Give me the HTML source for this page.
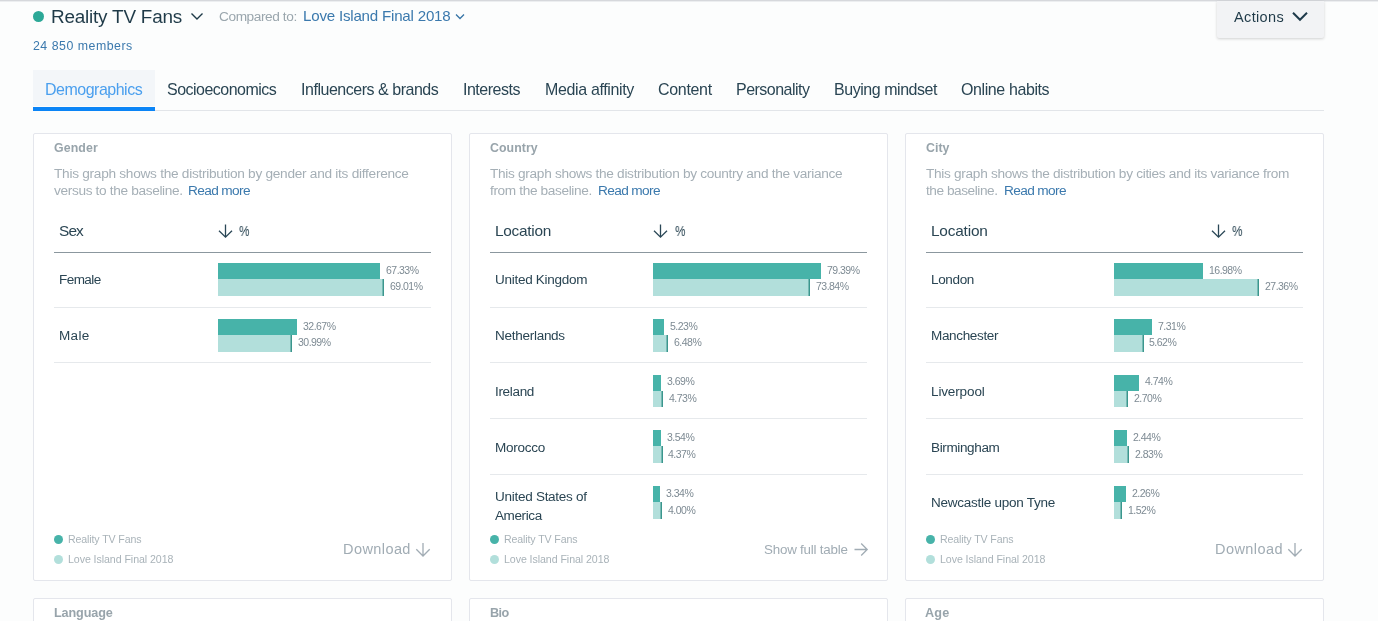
<!DOCTYPE html>
<html><head><meta charset="utf-8"><style>
html,body{margin:0;padding:0;}
body{width:1378px;height:621px;overflow:hidden;position:relative;background:#fcfdfd;font-family:"Liberation Sans",sans-serif;}
.t{position:absolute;white-space:nowrap;line-height:1;will-change:transform;}
.r{position:absolute;}
svg.r{overflow:visible;}
</style></head><body>
<div class="r" style="left:0px;top:0px;width:1378px;height:1px;background:#d6d8dc"></div>
<div class="r" style="left:0px;top:1px;width:1378px;height:1px;background:#eceef0"></div>
<div class="r" style="left:33px;top:11px;width:11px;height:11px;background:#2ca897;border-radius:50%"></div>
<div class="t" style="left:50.50px;top:8.00px;font-size:18.90px;letter-spacing:-0.197px;color:#1f3a48;">Reality TV Fans</div>
<svg class="r" style="left:190px;top:12px" width="14" height="9" viewBox="0 0 14 9"><path d="M1.5 1.5 L7 7 L12.5 1.5" fill="none" stroke="#1f3a48" stroke-width="1.4"/></svg>
<div class="t" style="left:218.50px;top:10.00px;font-size:13.66px;letter-spacing:-0.409px;color:#9aa6ad;">Compared to:</div>
<div class="t" style="left:302.50px;top:8.00px;font-size:15.12px;letter-spacing:-0.207px;color:#3b79ad;">Love Island Final 2018</div>
<svg class="r" style="left:455px;top:13px" width="10" height="7" viewBox="0 0 10 7"><path d="M1 1.5 L5 5.5 L9 1.5" fill="none" stroke="#3674a6" stroke-width="1.3"/></svg>
<div class="t" style="left:33.00px;top:40.00px;font-size:12.35px;letter-spacing:0.506px;color:#3b79ad;">24 850 members</div>
<div class="r" style="left:1217px;top:1px;width:107px;height:37px;background:#f2f3f5;box-shadow:0 1px 3px rgba(0,0,0,0.18);border-radius:0 0 2px 2px"></div>
<div class="t" style="left:1233.50px;top:10.00px;font-size:14.53px;letter-spacing:0.354px;color:#1f3a48;">Actions</div>
<svg class="r" style="left:1291px;top:11px" width="18" height="11" viewBox="0 0 18 11"><path d="M2 1.8 L9 8.8 L16 1.8" fill="none" stroke="#1f3b4b" stroke-width="2"/></svg>
<div class="r" style="left:33px;top:70px;width:121.5px;height:36px;background:#f3f6f9"></div>
<div class="r" style="left:33px;top:110px;width:1291px;height:1px;background:#e2e5e9"></div>
<div class="r" style="left:33px;top:107px;width:121.5px;height:4px;background:#0b84f6"></div>
<div class="t" style="left:45.20px;top:82.00px;font-size:15.99px;letter-spacing:-0.493px;color:#4a9fee;">Demographics</div>
<div class="t" style="left:167.10px;top:82.00px;font-size:15.99px;letter-spacing:-0.515px;color:#2a4553;">Socioeconomics</div>
<div class="t" style="left:301.10px;top:82.00px;font-size:15.99px;letter-spacing:-0.464px;color:#2a4553;">Influencers &amp; brands</div>
<div class="t" style="left:463.10px;top:82.00px;font-size:15.99px;letter-spacing:-0.489px;color:#2a4553;">Interests</div>
<div class="t" style="left:544.90px;top:82.00px;font-size:15.99px;letter-spacing:-0.349px;color:#2a4553;">Media affinity</div>
<div class="t" style="left:658.00px;top:82.00px;font-size:15.99px;letter-spacing:-0.307px;color:#2a4553;">Content</div>
<div class="t" style="left:735.80px;top:82.00px;font-size:15.99px;letter-spacing:-0.516px;color:#2a4553;">Personality</div>
<div class="t" style="left:833.90px;top:82.00px;font-size:15.99px;letter-spacing:-0.445px;color:#2a4553;">Buying mindset</div>
<div class="t" style="left:961.00px;top:82.00px;font-size:15.99px;letter-spacing:-0.391px;color:#2a4553;">Online habits</div>
<div class="r" style="left:33px;top:133px;width:419px;height:448px;background:#fff;border:1px solid #e4e6ec;border-radius:2px;box-sizing:border-box"></div>
<div class="r" style="left:33px;top:598px;width:419px;height:40px;background:#fff;border:1px solid #e4e6ec;border-radius:2px;box-sizing:border-box"></div>
<div class="r" style="left:469px;top:133px;width:419px;height:448px;background:#fff;border:1px solid #e4e6ec;border-radius:2px;box-sizing:border-box"></div>
<div class="r" style="left:469px;top:598px;width:419px;height:40px;background:#fff;border:1px solid #e4e6ec;border-radius:2px;box-sizing:border-box"></div>
<div class="r" style="left:905px;top:133px;width:419px;height:448px;background:#fff;border:1px solid #e4e6ec;border-radius:2px;box-sizing:border-box"></div>
<div class="r" style="left:905px;top:598px;width:419px;height:40px;background:#fff;border:1px solid #e4e6ec;border-radius:2px;box-sizing:border-box"></div>
<div class="t" style="left:53.80px;top:142.00px;font-size:12.35px;letter-spacing:0.112px;color:#98a4ab;font-weight:bold;">Gender</div>
<div class="t" style="left:53.80px;top:167.00px;font-size:13.66px;letter-spacing:-0.275px;color:#a5afb6;">This graph shows the distribution by gender and its difference</div>
<div class="t" style="left:53.80px;top:184.00px;font-size:13.66px;letter-spacing:-0.345px;color:#a5afb6;">versus to the baseline.</div>
<div class="t" style="left:188.20px;top:184.00px;font-size:13.66px;letter-spacing:-0.620px;color:#3b79ad;">Read more</div>
<div class="t" style="left:59.30px;top:223.00px;font-size:15.41px;letter-spacing:-0.889px;color:#2a4553;">Sex</div>
<svg class="r" style="left:217.5px;top:223px" width="16" height="16" viewBox="0 0 16 16"><path d="M7.5 1.5 V14.2 M1 7.8 L7.5 14.2 L14 7.8" fill="none" stroke="#2a4756" stroke-width="1.3"/></svg>
<div class="t" style="left:238.50px;top:224.00px;font-size:14.20px;letter-spacing:0.000px;color:#2a4553;transform:scaleX(0.84);transform-origin:0 0;">%</div>
<div class="r" style="left:54px;top:252px;width:377px;height:1px;background:#8b979e"></div>
<div class="r" style="left:54px;top:306.5px;width:377px;height:1px;background:#e6e9ec"></div>
<div class="r" style="left:54px;top:362.2px;width:377px;height:1px;background:#e6e9ec"></div>
<div class="t" style="left:59.30px;top:273.00px;font-size:13.52px;letter-spacing:-0.556px;color:#2a4553;">Female</div>
<div class="r" style="left:218px;top:263px;width:162.00px;height:16px;background:#47b3a9"></div>
<div class="r" style="left:218px;top:279px;width:166.20px;height:16.5px;background:#b2dfdb;box-shadow:inset -1.5px 0 0 #3b968d"></div>
<div class="t" style="left:385.80px;top:265.00px;font-size:10.50px;letter-spacing:-0.519px;color:#7d8a93;">67.33%</div>
<div class="t" style="left:390.00px;top:281.00px;font-size:10.50px;letter-spacing:-0.519px;color:#7d8a93;">69.01%</div>
<div class="t" style="left:59.30px;top:329.00px;font-size:13.52px;letter-spacing:0.322px;color:#2a4553;">Male</div>
<div class="r" style="left:218px;top:319px;width:78.80px;height:16px;background:#47b3a9"></div>
<div class="r" style="left:218px;top:335px;width:74.40px;height:16.5px;background:#b2dfdb;box-shadow:inset -1.5px 0 0 #3b968d"></div>
<div class="t" style="left:302.60px;top:321.00px;font-size:10.50px;letter-spacing:-0.519px;color:#7d8a93;">32.67%</div>
<div class="t" style="left:298.20px;top:337.00px;font-size:10.50px;letter-spacing:-0.519px;color:#7d8a93;">30.99%</div>
<div class="r" style="left:53.6px;top:535.2px;width:9px;height:9px;background:#47b3a9;border-radius:50%"></div>
<div class="r" style="left:53.6px;top:555px;width:9px;height:9px;background:#b2dfdb;border-radius:50%"></div>
<div class="t" style="left:68.10px;top:534.00px;font-size:10.61px;letter-spacing:-0.127px;color:#a9b3b9;">Reality TV Fans</div>
<div class="t" style="left:68.10px;top:554.00px;font-size:10.61px;letter-spacing:-0.066px;color:#a9b3b9;">Love Island Final 2018</div>
<div class="t" style="left:343.00px;top:542.00px;font-size:14.53px;letter-spacing:0.413px;color:#a1acb4;">Download</div>
<svg class="r" style="left:415.2px;top:542px" width="16" height="16" viewBox="0 0 16 16"><path d="M8 1 V14 M1.3 7.3 L8 14 L14.7 7.3" fill="none" stroke="#a1acb4" stroke-width="1.3"/></svg>
<div class="t" style="left:489.80px;top:142.00px;font-size:12.35px;letter-spacing:0.070px;color:#98a4ab;font-weight:bold;">Country</div>
<div class="t" style="left:489.80px;top:167.00px;font-size:13.66px;letter-spacing:-0.309px;color:#a5afb6;">This graph shows the distribution by country and the variance</div>
<div class="t" style="left:489.80px;top:184.00px;font-size:13.66px;letter-spacing:-0.372px;color:#a5afb6;">from the baseline.</div>
<div class="t" style="left:598.10px;top:184.00px;font-size:13.66px;letter-spacing:-0.620px;color:#3b79ad;">Read more</div>
<div class="t" style="left:495.20px;top:223.00px;font-size:15.41px;letter-spacing:-0.263px;color:#2a4553;">Location</div>
<svg class="r" style="left:652.5px;top:223px" width="16" height="16" viewBox="0 0 16 16"><path d="M7.5 1.5 V14.2 M1 7.8 L7.5 14.2 L14 7.8" fill="none" stroke="#2a4756" stroke-width="1.3"/></svg>
<div class="t" style="left:674.50px;top:224.00px;font-size:14.20px;letter-spacing:0.000px;color:#2a4553;transform:scaleX(0.84);transform-origin:0 0;">%</div>
<div class="r" style="left:490px;top:252px;width:377px;height:1px;background:#8b979e"></div>
<div class="r" style="left:490px;top:306.5px;width:377px;height:1px;background:#e6e9ec"></div>
<div class="r" style="left:490px;top:362.2px;width:377px;height:1px;background:#e6e9ec"></div>
<div class="r" style="left:490px;top:417.8px;width:377px;height:1px;background:#e6e9ec"></div>
<div class="r" style="left:490px;top:473.8px;width:377px;height:1px;background:#e6e9ec"></div>
<div class="t" style="left:495.20px;top:273.00px;font-size:13.52px;letter-spacing:-0.283px;color:#2a4553;">United Kingdom</div>
<div class="r" style="left:653.4px;top:263px;width:167.40px;height:16px;background:#47b3a9"></div>
<div class="r" style="left:653.4px;top:279px;width:156.40px;height:16.5px;background:#b2dfdb;box-shadow:inset -1.5px 0 0 #3b968d"></div>
<div class="t" style="left:826.60px;top:265.00px;font-size:10.50px;letter-spacing:-0.519px;color:#7d8a93;">79.39%</div>
<div class="t" style="left:815.60px;top:281.00px;font-size:10.50px;letter-spacing:-0.519px;color:#7d8a93;">73.84%</div>
<div class="t" style="left:495.20px;top:329.00px;font-size:13.52px;letter-spacing:-0.276px;color:#2a4553;">Netherlands</div>
<div class="r" style="left:653.4px;top:319px;width:10.80px;height:16px;background:#47b3a9"></div>
<div class="r" style="left:653.4px;top:335px;width:14.40px;height:16.5px;background:#b2dfdb;box-shadow:inset -1.5px 0 0 #3b968d"></div>
<div class="t" style="left:670.00px;top:321.00px;font-size:10.50px;letter-spacing:-0.510px;color:#7d8a93;">5.23%</div>
<div class="t" style="left:673.60px;top:337.00px;font-size:10.50px;letter-spacing:-0.510px;color:#7d8a93;">6.48%</div>
<div class="t" style="left:495.20px;top:385.00px;font-size:13.52px;letter-spacing:-0.327px;color:#2a4553;">Ireland</div>
<div class="r" style="left:653.4px;top:374.6px;width:7.78px;height:16px;background:#47b3a9"></div>
<div class="r" style="left:653.4px;top:390.6px;width:9.98px;height:16.5px;background:#b2dfdb;box-shadow:inset -1.5px 0 0 #3b968d"></div>
<div class="t" style="left:666.98px;top:376.00px;font-size:10.50px;letter-spacing:-0.510px;color:#7d8a93;">3.69%</div>
<div class="t" style="left:669.18px;top:393.00px;font-size:10.50px;letter-spacing:-0.510px;color:#7d8a93;">4.73%</div>
<div class="t" style="left:495.20px;top:441.00px;font-size:13.52px;letter-spacing:-0.257px;color:#2a4553;">Morocco</div>
<div class="r" style="left:653.4px;top:430.4px;width:7.47px;height:16px;background:#47b3a9"></div>
<div class="r" style="left:653.4px;top:446.4px;width:9.22px;height:16.5px;background:#b2dfdb;box-shadow:inset -1.5px 0 0 #3b968d"></div>
<div class="t" style="left:666.67px;top:432.00px;font-size:10.50px;letter-spacing:-0.510px;color:#7d8a93;">3.54%</div>
<div class="t" style="left:668.42px;top:449.00px;font-size:10.50px;letter-spacing:-0.510px;color:#7d8a93;">4.37%</div>
<div class="t" style="left:495.20px;top:490.00px;font-size:13.52px;letter-spacing:-0.276px;color:#2a4553;">United States of</div>
<div class="t" style="left:495.20px;top:509.00px;font-size:13.52px;letter-spacing:-0.402px;color:#2a4553;">America</div>
<div class="r" style="left:653.4px;top:486.3px;width:7.04px;height:16px;background:#47b3a9"></div>
<div class="r" style="left:653.4px;top:502.3px;width:8.44px;height:16.5px;background:#b2dfdb;box-shadow:inset -1.5px 0 0 #3b968d"></div>
<div class="t" style="left:666.24px;top:488.00px;font-size:10.50px;letter-spacing:-0.510px;color:#7d8a93;">3.34%</div>
<div class="t" style="left:667.64px;top:505.00px;font-size:10.50px;letter-spacing:-0.510px;color:#7d8a93;">4.00%</div>
<div class="r" style="left:489.6px;top:535.2px;width:9px;height:9px;background:#47b3a9;border-radius:50%"></div>
<div class="r" style="left:489.6px;top:555px;width:9px;height:9px;background:#b2dfdb;border-radius:50%"></div>
<div class="t" style="left:504.10px;top:534.00px;font-size:10.61px;letter-spacing:-0.127px;color:#a9b3b9;">Reality TV Fans</div>
<div class="t" style="left:504.10px;top:554.00px;font-size:10.61px;letter-spacing:-0.066px;color:#a9b3b9;">Love Island Final 2018</div>
<div class="t" style="left:764.40px;top:543.00px;font-size:13.37px;letter-spacing:-0.206px;color:#a1acb4;">Show full table</div>
<svg class="r" style="left:854.1999999999999px;top:542px" width="15" height="15" viewBox="0 0 15 15"><path d="M0.5 7.5 H13.2 M7.2 1.5 L13.2 7.5 L7.2 13.5" fill="none" stroke="#a1acb4" stroke-width="1.3"/></svg>
<div class="t" style="left:925.80px;top:142.00px;font-size:12.35px;letter-spacing:0.017px;color:#98a4ab;font-weight:bold;">City</div>
<div class="t" style="left:925.80px;top:167.00px;font-size:13.66px;letter-spacing:-0.311px;color:#a5afb6;">This graph shows the distribution by cities and its variance from</div>
<div class="t" style="left:925.80px;top:184.00px;font-size:13.66px;letter-spacing:-0.456px;color:#a5afb6;">the baseline.</div>
<div class="t" style="left:1003.90px;top:184.00px;font-size:13.66px;letter-spacing:-0.620px;color:#3b79ad;">Read more</div>
<div class="t" style="left:931.20px;top:223.00px;font-size:15.41px;letter-spacing:-0.205px;color:#2a4553;">Location</div>
<svg class="r" style="left:1210.5px;top:223px" width="16" height="16" viewBox="0 0 16 16"><path d="M7.5 1.5 V14.2 M1 7.8 L7.5 14.2 L14 7.8" fill="none" stroke="#2a4756" stroke-width="1.3"/></svg>
<div class="t" style="left:1231.70px;top:224.00px;font-size:14.20px;letter-spacing:0.000px;color:#2a4553;transform:scaleX(0.84);transform-origin:0 0;">%</div>
<div class="r" style="left:926px;top:252px;width:377px;height:1px;background:#8b979e"></div>
<div class="r" style="left:926px;top:306.5px;width:377px;height:1px;background:#e6e9ec"></div>
<div class="r" style="left:926px;top:362.2px;width:377px;height:1px;background:#e6e9ec"></div>
<div class="r" style="left:926px;top:417.8px;width:377px;height:1px;background:#e6e9ec"></div>
<div class="r" style="left:926px;top:473.8px;width:377px;height:1px;background:#e6e9ec"></div>
<div class="t" style="left:931.20px;top:273.00px;font-size:13.52px;letter-spacing:-0.356px;color:#2a4553;">London</div>
<div class="r" style="left:1114.2px;top:263px;width:88.50px;height:16px;background:#47b3a9"></div>
<div class="r" style="left:1114.2px;top:279px;width:144.60px;height:16.5px;background:#b2dfdb;box-shadow:inset -1.5px 0 0 #3b968d"></div>
<div class="t" style="left:1208.50px;top:265.00px;font-size:10.50px;letter-spacing:-0.519px;color:#7d8a93;">16.98%</div>
<div class="t" style="left:1264.60px;top:281.00px;font-size:10.50px;letter-spacing:-0.519px;color:#7d8a93;">27.36%</div>
<div class="t" style="left:931.20px;top:329.00px;font-size:13.52px;letter-spacing:-0.348px;color:#2a4553;">Manchester</div>
<div class="r" style="left:1114.2px;top:319px;width:38.00px;height:16px;background:#47b3a9"></div>
<div class="r" style="left:1114.2px;top:335px;width:29.40px;height:16.5px;background:#b2dfdb;box-shadow:inset -1.5px 0 0 #3b968d"></div>
<div class="t" style="left:1158.00px;top:321.00px;font-size:10.50px;letter-spacing:-0.510px;color:#7d8a93;">7.31%</div>
<div class="t" style="left:1149.40px;top:337.00px;font-size:10.50px;letter-spacing:-0.510px;color:#7d8a93;">5.62%</div>
<div class="t" style="left:931.20px;top:385.00px;font-size:13.52px;letter-spacing:-0.135px;color:#2a4553;">Liverpool</div>
<div class="r" style="left:1114.2px;top:374.6px;width:24.79px;height:16px;background:#47b3a9"></div>
<div class="r" style="left:1114.2px;top:390.6px;width:14.12px;height:16.5px;background:#b2dfdb;box-shadow:inset -1.5px 0 0 #3b968d"></div>
<div class="t" style="left:1144.79px;top:376.00px;font-size:10.50px;letter-spacing:-0.510px;color:#7d8a93;">4.74%</div>
<div class="t" style="left:1134.12px;top:393.00px;font-size:10.50px;letter-spacing:-0.510px;color:#7d8a93;">2.70%</div>
<div class="t" style="left:931.20px;top:441.00px;font-size:13.52px;letter-spacing:-0.368px;color:#2a4553;">Birmingham</div>
<div class="r" style="left:1114.2px;top:430.4px;width:12.76px;height:16px;background:#47b3a9"></div>
<div class="r" style="left:1114.2px;top:446.4px;width:14.80px;height:16.5px;background:#b2dfdb;box-shadow:inset -1.5px 0 0 #3b968d"></div>
<div class="t" style="left:1132.76px;top:432.00px;font-size:10.50px;letter-spacing:-0.510px;color:#7d8a93;">2.44%</div>
<div class="t" style="left:1134.80px;top:449.00px;font-size:10.50px;letter-spacing:-0.510px;color:#7d8a93;">2.83%</div>
<div class="t" style="left:931.20px;top:496.00px;font-size:13.52px;letter-spacing:-0.268px;color:#2a4553;">Newcastle upon Tyne</div>
<div class="r" style="left:1114.2px;top:486.3px;width:11.82px;height:16px;background:#47b3a9"></div>
<div class="r" style="left:1114.2px;top:502.3px;width:7.95px;height:16.5px;background:#b2dfdb;box-shadow:inset -1.5px 0 0 #3b968d"></div>
<div class="t" style="left:1131.82px;top:488.00px;font-size:10.50px;letter-spacing:-0.510px;color:#7d8a93;">2.26%</div>
<div class="t" style="left:1127.95px;top:505.00px;font-size:10.50px;letter-spacing:-0.510px;color:#7d8a93;">1.52%</div>
<div class="r" style="left:925.6px;top:535.2px;width:9px;height:9px;background:#47b3a9;border-radius:50%"></div>
<div class="r" style="left:925.6px;top:555px;width:9px;height:9px;background:#b2dfdb;border-radius:50%"></div>
<div class="t" style="left:940.10px;top:534.00px;font-size:10.61px;letter-spacing:-0.127px;color:#a9b3b9;">Reality TV Fans</div>
<div class="t" style="left:940.10px;top:554.00px;font-size:10.61px;letter-spacing:-0.066px;color:#a9b3b9;">Love Island Final 2018</div>
<div class="t" style="left:1214.50px;top:542.00px;font-size:14.53px;letter-spacing:0.427px;color:#a1acb4;">Download</div>
<svg class="r" style="left:1286.8px;top:542px" width="16" height="16" viewBox="0 0 16 16"><path d="M8 1 V14 M1.3 7.3 L8 14 L14.7 7.3" fill="none" stroke="#a1acb4" stroke-width="1.3"/></svg>
<div class="t" style="left:53.80px;top:607.00px;font-size:12.65px;letter-spacing:-0.136px;color:#98a4ab;font-weight:bold;">Language</div>
<div class="t" style="left:490.00px;top:607.00px;font-size:12.65px;letter-spacing:-0.530px;color:#98a4ab;font-weight:bold;">Bio</div>
<div class="t" style="left:925.20px;top:607.00px;font-size:12.65px;letter-spacing:0.150px;color:#98a4ab;font-weight:bold;">Age</div>
</body></html>
